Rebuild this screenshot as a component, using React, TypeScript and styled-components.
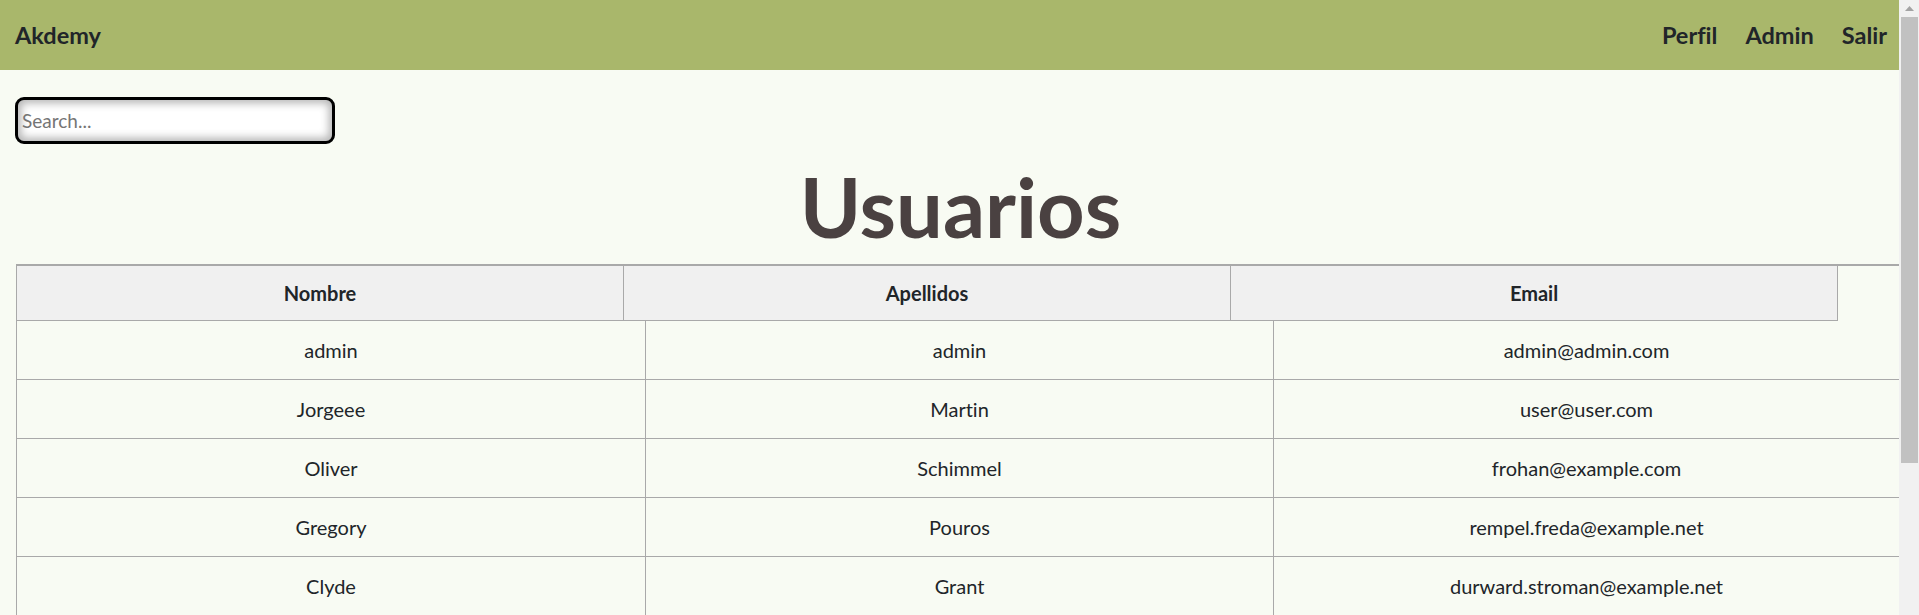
import React from "react";
import styled, { createGlobalStyle } from "styled-components";

const GlobalStyle = createGlobalStyle`
  html, body {
    margin: 0;
    padding: 0;
    background: #f8fbf3;
  }
  body {
    font-family: Lato, "Open Sans", "Noto Sans", sans-serif;
    color: #212529;
    font-variant-ligatures: none;
  }
  * { box-sizing: border-box; }
`;

const Page = styled.div`
  margin-right: 20px;
`;

const ScrollTrack = styled.div`
  position: fixed;
  top: 0;
  right: 0;
  width: 20px;
  height: 100vh;
  background: #f1f1f1;
  display: flex;
  flex-direction: column;
  align-items: flex-end;
  padding-right: 1px;
`;

const ScrollArrow = styled.div`
  width: 17px;
  height: 17px;
  display: flex;
  align-items: center;
  justify-content: center;
`;

const ScrollThumb = styled.div`
  width: 17px;
  height: 446px;
  background: #c1c1c1;
`;

const NavBar = styled.nav`
  height: 70px;
  background: #a9b76b;
  display: flex;
  align-items: center;
  justify-content: space-between;
  padding: 0 12px 0 15px;
`;

const Brand = styled.a`
  font-size: 23.5px;
  font-weight: 700;
  color: #212529;
  text-decoration: none;
`;

const NavLinks = styled.div`
  display: flex;
  gap: 28px;
`;

const NavLink = styled.a`
  font-size: 23.5px;
  font-weight: 700;
  color: #212529;
  text-decoration: none;
`;

const Main = styled.main`
  padding: 27px 0 0 16px;
`;

const SearchInput = styled.input`
  display: block;
  width: 320px;
  height: 47px;
  margin-left: -1px;
  border: 3px solid #000;
  border-radius: 9px;
  background: #fff;
  box-shadow: inset 0 0 8px 3px rgba(0, 0, 0, 0.3);
  padding: 0 4px;
  font-family: Lato, "Open Sans", sans-serif;
  font-size: 19px;
  color: #212529;
  outline: none;
  &::placeholder { color: #757575; }
`;

const Title = styled.h1`
  margin: 22px 0 17px;
  padding-left: 6px;
  font-size: 83px;
  line-height: 81px;
  font-weight: 700;
  text-align: center;
  color: #4a4141;
`;

const Table = styled.div`
  border-top: 2px solid #a9a9a9;
  border-left: 1px solid #a9a9a9;
`;

const HeaderRow = styled.div`
  display: grid;
  grid-template-columns: repeat(3, 607px);
`;

const HeaderCell = styled.div`
  height: 55px;
  display: flex;
  align-items: center;
  justify-content: center;
  background: #f0f0f0;
  border-right: 1px solid #a9a9a9;
  border-bottom: 1px solid #a9a9a9;
  font-size: 20px;
  font-weight: 700;
  color: #212529;
`;

const Row = styled.div`
  display: grid;
  grid-template-columns: 629px 628px 1fr;
  border-bottom: 1px solid #a9a9a9;
`;

const Cell = styled.div`
  height: 58px;
  display: flex;
  align-items: center;
  justify-content: center;
  border-right: 1px solid #a9a9a9;
  font-size: 20px;
  color: #212529;
  &:last-child { border-right: none; }
`;

const users = [
  ["admin", "admin", "admin@admin.com"],
  ["Jorgeee", "Martin", "user@user.com"],
  ["Oliver", "Schimmel", "frohan@example.com"],
  ["Gregory", "Pouros", "rempel.freda@example.net"],
  ["Clyde", "Grant", "durward.stroman@example.net"],
  ["Maxime", "Kub", "hbednar@example.org"],
  ["Lavada", "Hintz", "carroll.jude@example.com"],
  ["Dario", "Wehner", "lemke.otis@example.org"],
];

export default function App() {
  return (
    <>
      <GlobalStyle />
      <Page>
        <NavBar>
          <Brand href="#">Akdemy</Brand>
          <NavLinks>
            <NavLink href="#">Perfil</NavLink>
            <NavLink href="#">Admin</NavLink>
            <NavLink href="#">Salir</NavLink>
          </NavLinks>
        </NavBar>
        <Main>
          <SearchInput type="text" placeholder="Search..." />
          <Title>Usuarios</Title>
          <Table>
            <HeaderRow>
              <HeaderCell>Nombre</HeaderCell>
              <HeaderCell>Apellidos</HeaderCell>
              <HeaderCell>Email</HeaderCell>
            </HeaderRow>
            {users.map((u) => (
              <Row key={u[2]}>
                <Cell>{u[0]}</Cell>
                <Cell>{u[1]}</Cell>
                <Cell>{u[2]}</Cell>
              </Row>
            ))}
          </Table>
        </Main>
      </Page>
      <ScrollTrack aria-hidden="true">
        <ScrollArrow>
          <svg width="9" height="5" viewBox="0 0 9 5">
            <polygon points="0,5 4.5,0 9,5" fill="#a3a3a3" />
          </svg>
        </ScrollArrow>
        <ScrollThumb />
      </ScrollTrack>
    </>
  );
}
